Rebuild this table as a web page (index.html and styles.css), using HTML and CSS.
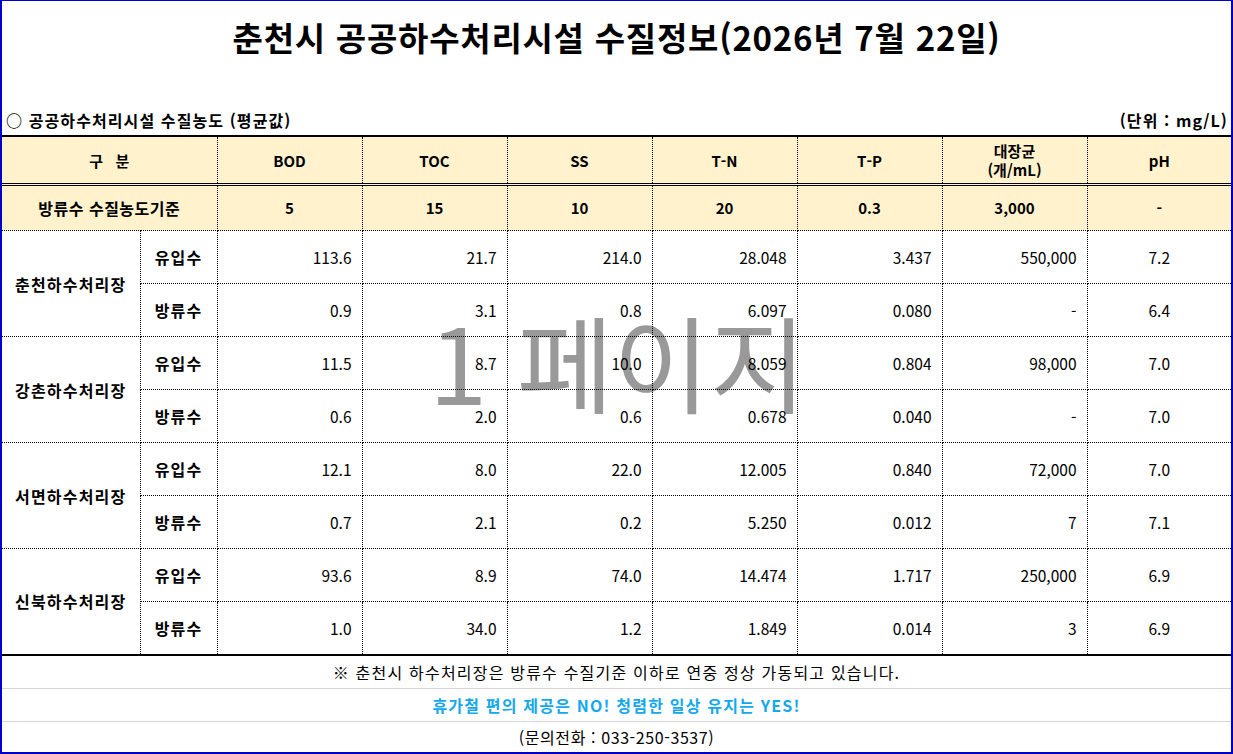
FILE: index.html
```html
<!DOCTYPE html>
<html lang="ko">
<head>
<meta charset="utf-8">
<title>춘천시 공공하수처리시설 수질정보</title>
<link rel="stylesheet" href="styles.css">
</head>
<body>
<div class="frame">
  <h1 class="title">춘천시 공공하수처리시설 수질정보(2026년 7월 22일)</h1>
  <div class="subhead">
    <span>○ 공공하수처리시설 수질농도 (평균값)</span>
    <span>(단위 : mg/L)</span>
  </div>
  <div class="tablewrap">
    <div class="watermark" aria-hidden="true">1 페이지</div>
    <table class="quality">
      <colgroup>
        <col class="c-plant"><col class="c-kind">
        <col class="c-val"><col class="c-val"><col class="c-val"><col class="c-val"><col class="c-val"><col class="c-val">
        <col class="c-ph">
      </colgroup>
      <thead>
        <tr class="r-head">
          <th colspan="2">구&nbsp;&nbsp;&nbsp;분</th>
          <th>BOD</th><th>TOC</th><th>SS</th><th>T-N</th><th>T-P</th><th>대장균<br>(개/mL)</th><th>pH</th>
        </tr>
        <tr class="r-std">
          <th colspan="2" class="std-label">방류수 수질농도기준</th>
          <th>5</th><th>15</th><th>10</th><th>20</th><th>0.3</th><th>3,000</th><th>-</th>
        </tr>
      </thead>
      <tbody>
        <tr>
          <th rowspan="2" class="plant">춘천하수처리장</th><th class="kind">유입수</th>
          <td>113.6</td><td>21.7</td><td>214.0</td><td>28.048</td><td>3.437</td><td>550,000</td><td class="ph">7.2</td>
        </tr>
        <tr>
          <th class="kind">방류수</th>
          <td>0.9</td><td>3.1</td><td>0.8</td><td>6.097</td><td>0.080</td><td>-</td><td class="ph">6.4</td>
        </tr>
        <tr>
          <th rowspan="2" class="plant">강촌하수처리장</th><th class="kind">유입수</th>
          <td>11.5</td><td>8.7</td><td>10.0</td><td>8.059</td><td>0.804</td><td>98,000</td><td class="ph">7.0</td>
        </tr>
        <tr>
          <th class="kind">방류수</th>
          <td>0.6</td><td>2.0</td><td>0.6</td><td>0.678</td><td>0.040</td><td>-</td><td class="ph">7.0</td>
        </tr>
        <tr>
          <th rowspan="2" class="plant">서면하수처리장</th><th class="kind">유입수</th>
          <td>12.1</td><td>8.0</td><td>22.0</td><td>12.005</td><td>0.840</td><td>72,000</td><td class="ph">7.0</td>
        </tr>
        <tr>
          <th class="kind">방류수</th>
          <td>0.7</td><td>2.1</td><td>0.2</td><td>5.250</td><td>0.012</td><td>7</td><td class="ph">7.1</td>
        </tr>
        <tr>
          <th rowspan="2" class="plant">신북하수처리장</th><th class="kind">유입수</th>
          <td>93.6</td><td>8.9</td><td>74.0</td><td>14.474</td><td>1.717</td><td>250,000</td><td class="ph">6.9</td>
        </tr>
        <tr>
          <th class="kind">방류수</th>
          <td>1.0</td><td>34.0</td><td>1.2</td><td>1.849</td><td>0.014</td><td>3</td><td class="ph">6.9</td>
        </tr>
      </tbody>
    </table>
  </div>
  <div class="notes">
    <p class="note">※ 춘천시 하수처리장은 방류수 수질기준 이하로 연중 정상 가동되고 있습니다.</p>
    <p class="note note-blue">휴가철 편의 제공은 NO! 청렴한 일상 유지는 YES!</p>
    <p class="note note-phone">(문의전화 : 033-250-3537)</p>
  </div>
</div>
</body>
</html>
```

FILE: styles.css
```css
html, body {
  margin: 0;
  padding: 0;
  background: #ffffff;
}

body {
  font-family: "Noto Sans CJK KR", "Noto Sans", sans-serif;
  color: #000000;
}

.frame {
  width: 1233px;
  height: 754px;
  box-sizing: border-box;
  border: 2px solid #0000cd;
  border-top-width: 1px;
  display: flex;
  flex-direction: column;
  overflow: hidden;
}

.title {
  margin: 0;
  height: 72px;
  display: flex;
  align-items: center;
  justify-content: center;
  font-size: 33px;
  font-weight: 700;
  line-height: 1;
  letter-spacing: 0.75px;
}

.subhead {
  height: 62px;
  box-sizing: border-box;
  display: flex;
  justify-content: space-between;
  align-items: flex-end;
  padding: 0 3px 6px 4px;
  font-size: 16px;
  font-weight: 700;
  line-height: 18px;
  letter-spacing: 1.1px;
}

.tablewrap {
  position: relative;
}

.watermark {
  position: absolute;
  left: 427px;
  top: 172px;
  font-size: 105px;
  line-height: 1;
  color: #999999;
  font-weight: 400;
  white-space: nowrap;
  z-index: 0;
  pointer-events: none;
}

.quality {
  position: relative;
  z-index: 1;
  width: 1229px;
  table-layout: fixed;
  border-collapse: collapse;
  font-size: 15px;
  line-height: 18px;
}

.c-plant { width: 138px; }
.c-kind { width: 77px; }
.c-val { width: 145px; }
.c-ph { width: 144px; }

.quality th,
.quality td {
  padding: 0;
  border: 1px dotted #000000;
}

.quality tr > :first-child { border-left: none; }
.quality tr > :last-child { border-right: none; }

.quality thead th {
  background: #fff2cc;
  font-weight: 700;
  text-align: center;
}

.r-head th {
  height: 46px;
  border-top: 2px solid #000000;
  border-bottom: 3px double #000000;
  line-height: 19px;
}

.r-std th {
  height: 44px;
}

.quality thead .std-label {
  font-size: 16px;
  letter-spacing: 0.5px;
}

.quality tbody tr {
  height: 53px;
}

.quality tbody th {
  font-weight: 700;
  text-align: center;
  font-size: 16px;
  letter-spacing: 1.2px;
}

.plant { border-left: none; }

.quality tbody td {
  text-align: right;
  padding-right: 10px;
  font-size: 15.5px;
}

.quality tbody td.ph {
  text-align: center;
  padding-right: 0;
}

.quality tbody tr:last-child > *,
.quality tbody tr:nth-last-child(2) > .plant {
  border-bottom: 2px solid #000000;
}

.notes {
  flex: 1;
  display: flex;
  flex-direction: column;
}

.note {
  margin: 0;
  height: 33px;
  box-sizing: border-box;
  display: flex;
  align-items: center;
  justify-content: center;
  font-size: 16px;
  line-height: 18px;
  letter-spacing: 1.2px;
  border-bottom: 1px solid #d4d4d4;
}

.note:last-child {
  border-bottom: none;
  flex: 1;
}

.note-blue {
  color: #14a8ec;
  font-weight: 700;
}

.note-phone {
  letter-spacing: 0.6px;
}
```
